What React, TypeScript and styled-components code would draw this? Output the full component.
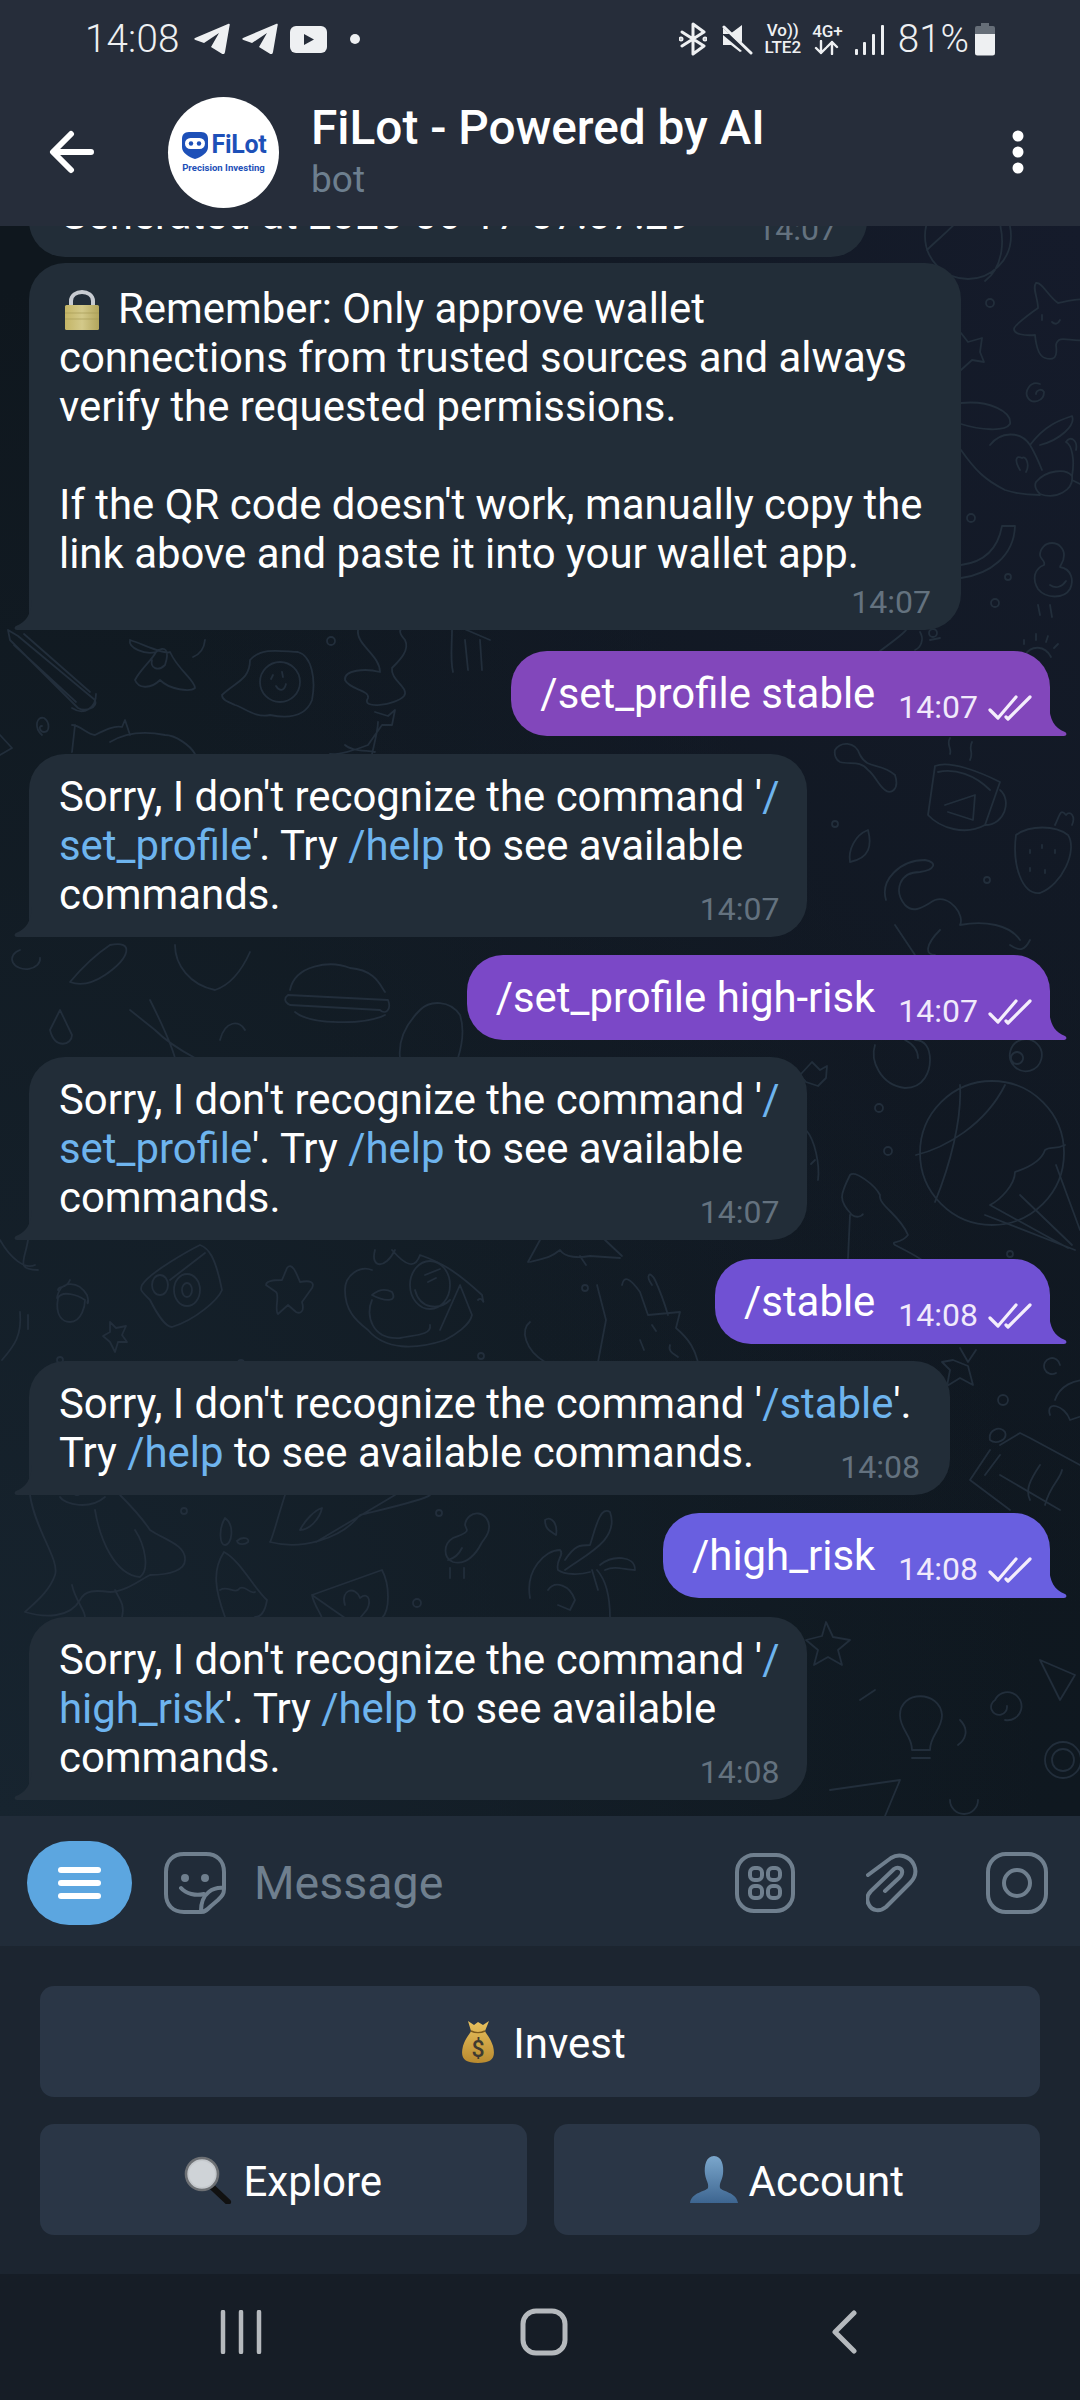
import React from "react";
import styled, { createGlobalStyle } from "styled-components";

const Global = createGlobalStyle`
  html, body { margin: 0; padding: 0; background: #161d26; }
  body { font-family: Roboto, "Liberation Sans", sans-serif; }
  #root { width: 1080px; height: 2400px; }
`;

const Screen = styled.div`
  width: 1080px;
  height: 2400px;
  display: flex;
  flex-direction: column;
  overflow: hidden;
`;

const Header = styled.header`
  height: 226px;
  flex: none;
  background: #262d3a;
  display: flex;
  flex-direction: column;
  position: relative;
  z-index: 2;
`;

const StatusBar = styled.div`
  height: 78px;
  display: flex;
  align-items: flex-start;
  justify-content: space-between;
  padding: 0 84px 0 85px;
  color: #eef0f2;
`;

const StatusGroup = styled.div`
  display: flex;
  align-items: center;
  height: 78px;
`;

const Clock = styled.span`
  font-size: 38.5px;
  font-weight: 300;
  line-height: 78px;
  margin-right: 14px;
  letter-spacing: 0.2px;
`;

const Battery = styled.span`
  font-size: 38.5px;
  font-weight: 300;
  line-height: 78px;
  margin: 0 5px 0 14px;
`;

const NetStack = styled.span`
  display: flex;
  flex-direction: column;
  align-items: center;
  font-size: 17px;
  font-weight: 500;
  line-height: 17px;
  margin-left: 11px;
`;

const Toolbar = styled.div`
  flex: 1;
  display: flex;
  align-items: center;
  padding: 0 0 0 48px;
`;

const Avatar = styled.div`
  width: 111px;
  height: 111px;
  border-radius: 50%;
  background: #fff;
  margin-left: 72px;
  flex: none;
  display: flex;
  flex-direction: column;
  align-items: center;
  justify-content: center;
  color: #1d50b8;
`;

const LogoTop = styled.div`
  display: flex;
  align-items: center;
  gap: 3px;
  font-size: 25px;
  font-weight: 700;
  line-height: 28px;
  letter-spacing: -0.3px;
`;

const LogoSub = styled.div`
  font-size: 9.6px;
  font-weight: 700;
  line-height: 11px;
  margin-top: 3px;
`;

const TitleBlock = styled.div`
  margin-left: 32px;
  flex: 1;
  margin-top: -2px;
`;

const Title = styled.div`
  color: #fff;
  font-size: 47.8px;
  font-weight: 500;
  line-height: 56px;
`;

const Subtitle = styled.div`
  color: #6d7f8f;
  font-size: 37px;
  line-height: 44px;
  margin-top: 2px;
`;

const MoreDots = styled.svg`
  margin-right: 56px;
  flex: none;
`;

const Chat = styled.main`
  height: 1590px;
  flex: none;
  position: relative;
  overflow: hidden;
  background:
    radial-gradient(ellipse at 100% 0%, #151b2b 0, transparent 62%),
    radial-gradient(ellipse at 0% 100%, #17242f 0, transparent 68%),
    radial-gradient(ellipse at 100% 100%, #0f1820 0, transparent 45%),
    #0f171e;
`;

const Wallpaper = styled.svg`
  position: absolute;
  inset: 0;
  fill: none;
  stroke: #222e3b;
  stroke-width: 1.8;
  stroke-linecap: round;
  stroke-linejoin: round;
`;

const MessageList = styled.div`
  position: relative;
  height: 100%;
  display: flex;
  flex-direction: column;
  justify-content: flex-end;
  padding: 0 30px 16px 29px;
  box-sizing: border-box;
`;

const Incoming = styled.div<{ $width: number; $top: number; $noTail?: boolean; $tall?: boolean }>`
  position: relative;
  flex: none;
  width: ${(p) => p.$width}px;
  box-sizing: border-box;
  margin-top: ${(p) => p.$top}px;
  background: #222d38;
  border-radius: 36px 36px 36px ${(p) => (p.$noTail ? "36px" : "0")};
  padding: ${(p) => (p.$tall ? "21px" : "18px")} 30px 12px 30px;
  display: grid;
`;

const IncomingText = styled.div<{ $pad: number }>`
  grid-area: 1 / 1;
  color: #fff;
  font-size: 41.9px;
  line-height: 49px;
  white-space: nowrap;
  padding-bottom: ${(p) => p.$pad}px;
`;

const IncomingTime = styled.div`
  grid-area: 1 / 1;
  align-self: end;
  justify-self: end;
  color: #64727f;
  font-size: 32px;
  line-height: 31px;
`;

const Outgoing = styled.div<{ $color: string; $top: number }>`
  position: relative;
  flex: none;
  align-self: flex-end;
  margin-top: ${(p) => p.$top}px;
  background: ${(p) => p.$color};
  border-radius: 36px 36px 0 36px;
  padding: 18px 18px 13px 29px;
  display: flex;
  align-items: flex-end;
`;

const OutgoingText = styled.div`
  color: #fff;
  font-size: 41.9px;
  line-height: 49px;
  white-space: nowrap;
  padding-bottom: 5px;
`;

const OutgoingMeta = styled.div`
  display: flex;
  align-items: center;
  margin-left: 23px;
  color: #f1eafb;
  font-size: 32px;
  line-height: 31px;
  gap: 10px;
`;

const Tail = styled.svg<{ $side: "left" | "right" }>`
  position: absolute;
  bottom: 0;
  ${(p) => (p.$side === "right" ? "right: -17px;" : "left: -15px; transform: scaleX(-1);")}
`;

const Cmd = styled.span`
  color: #6eb4ee;
`;

const InlineEmoji = styled.svg`
  display: inline-block;
  vertical-align: -8px;
  margin: 0 17px 0 4px;
`;

const InputBar = styled.div`
  height: 130px;
  flex: none;
  background: #212c39;
  display: flex;
  align-items: center;
  padding: 3px 32px 0 27px;
  color: #6f7f8e;
  box-sizing: border-box;
`;

const MenuButton = styled.div`
  width: 105px;
  height: 84px;
  border-radius: 42px;
  background: #5ca6e0;
  display: flex;
  flex-direction: column;
  align-items: center;
  justify-content: center;
  gap: 7px;
  flex: none;
`;

const MenuLine = styled.span`
  width: 43px;
  height: 6px;
  border-radius: 3px;
  background: #fff;
`;

const InputIcon = styled.svg<{ $left: number }>`
  flex: none;
  margin-left: ${(p) => p.$left}px;
  fill: none;
  stroke: currentColor;
  stroke-width: 4;
  stroke-linecap: round;
  stroke-linejoin: round;
`;

const Placeholder = styled.div`
  flex: 1;
  margin-left: 28px;
  font-size: 46.5px;
  line-height: 50px;
  color: #6f7f8e;
`;

const Keyboard = styled.div`
  height: 328px;
  flex: none;
  box-sizing: border-box;
  background: #1c2530;
  padding: 40px 40px 0;
  display: flex;
  flex-direction: column;
  gap: 27px;
`;

const KeyRow = styled.div`
  display: flex;
  gap: 27px;
`;

const Key = styled.div`
  flex: 1;
  height: 111px;
  border-radius: 14px;
  background: #2a3646;
  color: #fff;
  font-size: 42px;
  line-height: 50px;
  display: flex;
  align-items: center;
  justify-content: center;
  gap: 11px;
`;

const KeyLabel = styled.span`
  margin-top: 5px;
`;

const NavBar = styled.nav`
  flex: 1;
  background: #161d26;
  position: relative;
  display: flex;
  align-items: center;
  padding-left: 220px;
  color: #b5b9bd;
`;

const NavIcon = styled.svg<{ $left: number }>`
  flex: none;
  margin-left: ${(p) => p.$left}px;
  margin-top: -10px;
  fill: none;
  stroke: currentColor;
  stroke-linecap: round;
  stroke-linejoin: round;
`;

const doodlePaths = [
  "M925 236a43 43 0 1 0 86 0a43 43 0 1 0 -86 0 M927 250 C945 232 962 222 972 198 M990 198 C1012 240 1000 270 985 281",
  "M1036 283 C1042 282 1048 296 1058 303 C1068 301 1080 298 1084 300 M1084 340 C1070 342 1058 334 1056 345 C1058 360 1052 360 1045 358 C1038 356 1036 345 1035 335 C1024 336 1014 334 1014 329 C1014 325 1030 314 1038 308 C1038 298 1032 288 1036 283",
  "M1042 315 v5 M1052 322 c3 3 6 2 8 -2",
  "M961 333 L968 342 L982 338 L980 352 L984 362 L972 360 L961 370",
  "M1040 384 C1030 380 1024 392 1028 398 C1032 404 1044 402 1044 392 C1042 388 1036 390 1036 394",
  "M961 403 C990 400 1012 412 1010 424 C1005 432 980 430 961 424 M961 450 C975 470 985 480 1005 490 C1020 495 1032 495 1040 495 M990 445 C1000 432 1020 430 1030 445 C1036 455 1040 465 1042 470 M1030 445 C1045 425 1060 420 1072 416 C1076 425 1060 440 1040 445",
  "M1020 470 C1014 460 1016 455 1022 458 C1026 455 1030 465 1026 472 M1036 482 C1046 470 1066 468 1072 476 C1074 490 1056 500 1040 494 C1036 490 1034 486 1036 482 M1072 476 C1075 460 1072 445 1066 442 C1070 435 1078 440 1076 450 M1072 480 l8 4",
  "M961 565 C985 562 998 548 1002 526 L1015 526 C1014 556 990 574 961 578",
  "M1040 555 a12 12 0 1 1 24 0 c0 8 -4 10 -4 12 c12 2 14 14 10 22 c-6 10 -24 10 -32 0 c-6 -10 -4 -20 6 -24 c2 -4 -4 -6 -4 -10 Z M1050 585 c6 4 12 2 16 -4 M1038 605 l2 10 M1050 605 l2 12",
  "M1025 655 c6 -10 20 -10 26 2 M1024 640 v4 M1036 634 v6 M1048 636 l-2 6 M1058 644 l-4 4",
  "M880 651 C895 640 905 632 906 630 M920 632 C925 640 920 648 915 650 M930 640 l10 -2",
  "M8 630 L18 636 L95 700 C98 708 85 712 78 708 L10 640 Z M24 634 L90 692 M14 645 L76 702 M72 708 C84 716 96 708 96 694",
  "M130 640 C145 645 165 655 170 652 C178 670 195 680 195 688 C190 692 170 690 160 680 C150 690 138 688 135 680 C140 670 152 660 156 652 C145 655 128 648 130 640 M156 652 C165 645 170 650 165 665 C158 672 150 668 152 660 M205 640 C204 650 198 655 193 657",
  "M222 695 C235 682 250 680 250 660 C262 646 285 652 298 652 C312 656 316 680 312 700 C305 718 285 718 270 715 C255 718 245 708 235 705 C228 702 222 700 222 695",
  "M260 682 a20 20 0 1 0 40 0 a20 20 0 1 0 -40 0 M273 675 l-2 4 M282 672 l1 5 M276 686 c3 5 8 6 10 -2",
  "M358 630 C356 645 380 655 380 672 C365 668 344 670 345 680 C350 690 370 690 368 698 C360 710 396 705 404 696 C410 688 390 680 392 668 C400 660 410 650 405 640 C398 632 400 630 402 628",
  "M375 712 L388 716 L395 710 L392 725 L382 725 L368 745 C355 750 340 755 330 754 M345 745 C350 750 360 750 375 752 M378 722 C378 730 374 745 372 754",
  "M452 630 C452 645 450 660 453 672 M455 625 L490 640 M465 640 L468 670 M480 640 L482 670",
  "M75 725 L72 752 M72 725 C80 725 88 735 95 735 C105 730 115 725 122 727 L125 720 L130 735 M110 742 C130 730 150 732 165 735 C175 735 190 745 195 754",
  "M42 735 C34 728 36 716 44 718 C50 722 50 732 44 732 C40 732 38 726 42 726",
  "M0 735 L12 748 L0 755",
  "M935 766 C950 760 980 772 1000 782 L985 825 C965 836 940 828 928 815 Z M938 772 C955 768 975 775 990 790 M1000 790 C1012 800 1005 825 985 825 M945 805 L975 795 L973 820 L948 812 M950 738 C946 745 952 748 950 754 M972 742 C968 750 974 752 970 760",
  "M835 750 C840 742 855 740 860 755 C868 770 880 762 895 775 C900 790 890 795 885 790 C878 785 875 775 868 770 C860 760 850 765 840 762 C836 760 834 755 835 750",
  "M1016 835 C1030 825 1055 825 1068 835 C1078 850 1062 885 1040 893 C1022 895 1012 865 1016 835 M1055 825 C1060 815 1060 808 1066 815 C1070 810 1076 816 1072 825 M1030 850 v3 M1042 845 v3 M1055 850 v3 M1030 868 v3 M1045 870 v3",
  "M850 862 C848 850 855 835 868 830 C872 845 870 858 850 862",
  "M886 900 C880 880 900 860 925 860 C938 862 935 870 920 872 C900 872 893 890 905 905 C915 915 925 905 935 900 C950 895 965 915 960 925 C985 920 1010 925 1020 940 M895 925 L915 955 M940 930 C925 945 925 955 935 955 M1010 945 C1020 952 1025 950 1030 940",
  "M20 950 a14 10 0 1 0 20 8 M110 945 C135 940 130 958 105 975 C90 985 78 985 70 982 C80 970 95 955 110 945",
  "M175 945 C175 965 190 985 215 990 C230 985 242 970 250 952",
  "M290 990 C295 965 330 960 350 968 C375 970 380 985 385 992 M288 995 L388 1000 C392 1010 385 1015 380 1010 L290 1005 C284 1002 284 998 288 995 M295 1012 C310 1025 365 1025 385 1015",
  "M150 1000 C160 1020 170 1040 175 1058 M130 1010 L155 1030 C165 1040 180 1050 195 1058",
  "M220 1040 C225 1020 240 1020 245 1030 M50 1030 L60 1010 L72 1035 C72 1045 55 1050 50 1030",
  "M420 1010 C430 1000 450 1000 460 1015 C465 1030 462 1045 458 1058 M400 1058 C398 1040 405 1025 420 1010",
  "M875 1045 C870 1060 880 1085 905 1088 C925 1088 930 1070 930 1060 C930 1048 925 1040 915 1040 M905 1040 C915 1045 918 1052 918 1058",
  "M1015 1067 a16 16 0 1 0 -1 -1 M1017 1052 a6 6 0 1 0 0.1 0 ",
  "M812 1062 L820 1070 L827 1066 L826 1078 L818 1086 L806 1082 L800 1075 Z",
  "M920 1153 a72 72 0 1 0 144 0 a72 72 0 1 0 -144 0 M916 1155 C945 1148 985 1125 1005 1085 M960 1085 C962 1120 950 1165 935 1202",
  "M1065 1145 C1055 1150 1050 1146 1045 1150 C1040 1165 1020 1170 1015 1172 C1015 1185 1000 1200 990 1205 L1068 1248 M1020 1195 L1072 1245 M1056 1165 L1080 1230 M985 1215 L1075 1250",
  "M850 1175 C855 1170 875 1185 880 1195 C878 1205 900 1215 908 1235 C900 1245 890 1240 895 1245 C905 1250 915 1255 925 1262 M850 1175 C840 1195 838 1200 852 1215 C860 1220 865 1212 862 1215 M850 1215 L848 1258",
  "M806 1130 C815 1140 820 1165 818 1180 M815 1160 l-4 4",
  "M28 1240 C25 1260 15 1270 38 1270 M0 1240 C10 1258 25 1270 35 1265",
  "M57 1298 C60 1280 78 1280 87 1295 C90 1305 86 1305 88 1300 M58 1298 C55 1315 62 1322 70 1322 C82 1322 85 1305 85 1300 C78 1295 62 1290 58 1298 M70 1280 C66 1290 58 1285 58 1290",
  "M20 1312 C22 1335 15 1345 2 1360 M28 1315 v14",
  "M142 1285 C150 1272 190 1250 200 1245 C208 1248 215 1255 222 1290 C218 1300 195 1320 172 1327 C165 1327 155 1310 150 1300 C140 1290 140 1290 142 1285 M170 1280 L205 1253",
  "M152 1285 a8 10 0 1 0 16 0 a8 10 0 1 0 -16 0 M174 1290 a13 16 0 1 0 26 0 a13 16 0 1 0 -26 0 M182 1290 a5 7 0 1 0 10 0 a5 7 0 1 0 -10 0",
  "M287 1268 C292 1262 296 1272 300 1282 C310 1280 315 1282 312 1288 L302 1302 C305 1312 300 1314 296 1312 L288 1305 L278 1314 C274 1310 280 1295 276 1292 L266 1285 C266 1280 278 1280 282 1280 Z",
  "M110 1322 L116 1328 L126 1326 L122 1335 L127 1342 L118 1342 L115 1352 L110 1342 L103 1336 L110 1332 Z",
  "M375 1250 C370 1268 385 1270 395 1250 M392 1250 C405 1265 415 1270 420 1255 C440 1262 455 1270 482 1295 C485 1310 483 1295 478 1300 M345 1290 C345 1275 360 1265 372 1270 M345 1290 C345 1310 355 1320 368 1330 C385 1350 415 1350 445 1340 C455 1335 470 1325 472 1315 L460 1285 L440 1330",
  "M410 1285 a20 24 0 1 0 40 0 a20 24 0 1 0 -40 0 M415 1290 C420 1310 440 1310 450 1300 M425 1275 l15 -6 M428 1282 l8 -4",
  "M372 1295 C385 1302 398 1302 392 1292 C385 1288 378 1290 372 1295 M372 1300 C365 1315 372 1340 400 1338 C415 1335 432 1335 430 1325",
  "M530 1262 C545 1258 550 1258 560 1250 C565 1258 580 1258 590 1256 L620 1258 M540 1240 L528 1262 M580 1256 L586 1265 M605 1240 L622 1256",
  "M530 1322 C520 1330 525 1350 545 1362 M597 1285 L606 1320 L598 1362 M622 1285 C624 1275 630 1278 640 1292 L648 1315 L680 1312 L676 1328 C690 1340 695 1350 698 1362 M652 1285 C645 1275 650 1270 655 1280 C662 1295 665 1305 668 1315",
  "M640 1340 l4 10 M652 1325 l4 6 M670 1345 c-2 6 2 8 8 12",
  "M30 1495 C35 1530 60 1560 55 1575 C50 1590 38 1600 25 1612 C45 1618 70 1618 80 1600 C85 1590 95 1590 110 1592 C125 1592 140 1580 150 1575 C170 1575 185 1570 185 1560 C186 1545 165 1540 150 1530 C140 1515 125 1500 120 1495",
  "M60 1497 C65 1505 90 1510 105 1497 M95 1510 C100 1540 115 1575 140 1577 C150 1570 145 1545 135 1530",
  "M72 1585 C75 1600 85 1610 85 1617 M115 1590 C120 1600 125 1605 122 1617",
  "M225 1518 C218 1530 220 1545 225 1545 C232 1545 235 1525 225 1518 M237 1541 C242 1536 250 1538 248 1542 C245 1545 238 1545 237 1541",
  "M224 1552 C212 1570 215 1590 225 1617 M224 1552 C240 1560 255 1590 267 1600 C265 1612 260 1617 255 1617 M220 1590 C228 1585 235 1595 240 1588 C246 1585 250 1595 255 1592",
  "M285 1495 C280 1510 272 1540 270 1542 C300 1550 340 1540 360 1515 C380 1510 425 1500 430 1495 M316 1542 L395 1495 M300 1530 C305 1520 315 1510 322 1508 C320 1518 310 1530 300 1530",
  "M312 1595 L382 1570 C390 1585 390 1610 382 1618 M312 1595 C314 1605 320 1612 322 1618 M312 1595 L345 1618 M345 1605 C340 1590 355 1585 360 1598 C370 1590 372 1605 365 1612 L360 1618",
  "M465 1525 a12 13 0 1 1 24 3 c0 7 -6 12 -8 16 c-4 8 -14 22 -28 18 c-10 -4 -10 -18 0 -24 c4 -2 14 -4 14 -8 Z M448 1560 c8 -2 12 -8 14 -12 M450 1568 v10 M464 1568 v10",
  "M545 1520 C552 1515 558 1525 556 1535 C548 1530 545 1528 545 1520 M530 1598 C525 1570 545 1550 560 1550 C565 1555 555 1560 558 1570 C565 1575 580 1575 590 1572 M610 1618 C610 1595 606 1580 597 1570 M592 1570 L598 1590 M565 1570 C585 1555 620 1540 610 1512 C600 1505 595 1530 590 1545 C580 1545 575 1545 565 1560",
  "M548 1590 C555 1580 570 1585 575 1600 L570 1610 L558 1605 M600 1565 C612 1555 635 1555 635 1570 C625 1570 615 1565 605 1570",
  "M826 1622 L833 1637 L850 1640 L838 1650 L842 1665 L828 1657 L814 1665 L818 1650 L806 1640 L822 1636 Z",
  "M900 1715 C900 1690 940 1690 942 1715 C942 1730 930 1735 930 1750 L912 1750 C912 1735 900 1730 900 1715 M912 1758 h18",
  "M1005 1720 a14 14 0 1 0 -10 -20 a8 8 0 1 0 12 6",
  "M830 1790 L900 1780 L885 1816 M960 1720 C970 1730 965 1740 958 1745",
  "M1040 1660 L1075 1675 L1060 1700 Z M1045 1760 a18 18 0 1 0 36 0 a18 18 0 1 0 -36 0 M1052 1760 a11 11 0 1 0 22 0 a11 11 0 1 0 -22 0",
  "M950 1800 a14 14 0 1 0 28 0 M860 1700 L875 1690",
  "M960 1348 L968 1362 L976 1350 M953 1360 L968 1366 L973 1385 L960 1378 L947 1386 L950 1370 L942 1362 Z",
  "M1060 1365 a8 8 0 1 0 -4 8 M1055 1400 C1060 1385 1075 1380 1085 1380 M1050 1415 C1045 1400 1065 1405 1070 1420 L1085 1415",
  "M1000 1445 L1020 1433 L1030 1438 L1080 1465 M990 1440 C988 1430 1000 1425 1005 1432 C1008 1440 996 1445 990 1440 M990 1450 L970 1480 L1010 1510 M1000 1455 L985 1475 M1000 1475 L1060 1510 M1062 1470 C1060 1480 1050 1485 1045 1505 M1040 1465 C1030 1480 1025 1490 1030 1500",
];

const doodleRings: [number, number, number][] = [
  [990, 303, 4], [971, 518, 4], [1008, 577, 3], [995, 603, 4], [933, 633, 4], [331, 641, 4],
  [879, 1108, 4], [888, 1151, 4], [1010, 1254, 3], [1003, 1400, 5], [241, 1363, 3], [60, 1360, 3],
  [585, 1288, 3], [481, 1356, 3], [184, 1511, 3], [439, 1513, 3], [417, 1603, 4], [77, 1492, 3],
  [835, 824, 3], [987, 880, 3],
];

function Doodles() {
  return (
    <Wallpaper width="1080" height="1590" viewBox="0 226 1080 1590">
      {doodlePaths.map((d, i) => (
        <path key={i} d={d} />
      ))}
      {doodleRings.map(([cx, cy, r], i) => (
        <circle key={i} cx={cx} cy={cy} r={r} />
      ))}
    </Wallpaper>
  );
}

const BubbleTail = ({ side, color }: { side: "left" | "right"; color: string }) => (
  <Tail $side={side} width="18" height="30" viewBox="0 0 18 30">
    <path d="M0 0 C1 13 5 22 16 26 C18 27 18 30 15 30 L0 30 Z" fill={color} />
  </Tail>
);

const Checks = () => (
  <svg width="44" height="26" viewBox="0 0 44 26" fill="none" stroke="#f4eefc" strokeWidth="3.2" strokeLinecap="round" strokeLinejoin="round">
    <path d="M2 15 L10 23 L28 2" />
    <path d="M18 22 L20 24 L42 2" />
  </svg>
);

const Lock = () => (
  <InlineEmoji width="38" height="44" viewBox="0 0 38 44">
    <defs>
      <linearGradient id="lockBody" x1="0" x2="1" y1="0" y2="0">
        <stop offset="0" stopColor="#c4b566" />
        <stop offset="0.5" stopColor="#d3c98a" />
        <stop offset="1" stopColor="#b3a65c" />
      </linearGradient>
    </defs>
    <path d="M8 20 V14 C8 2 30 2 30 14 V20" fill="none" stroke="#c8ccd2" strokeWidth="4" />
    <rect x="2" y="18" width="34" height="25" rx="1.5" fill="url(#lockBody)" />
    <path d="M2 26h34M2 32h34" stroke="#a89c58" strokeWidth="0.7" />
  </InlineEmoji>
);

const MoneyBag = () => (
  <svg width="48" height="48" viewBox="-6 -2 48 48">
    <defs>
      <linearGradient id="bag" x1="0" x2="0" y1="0" y2="1">
        <stop offset="0" stopColor="#e9c25e" />
        <stop offset="1" stopColor="#b98a2f" />
      </linearGradient>
    </defs>
    <path d="M8 1 L14 5 L18 2 L23 5 L29 1 L25 11 C26 14 30 17 33 26 C36 38 32 43 18 43 C4 43 0 38 3 26 C6 17 10 14 11 11 Z" fill="url(#bag)" />
    <path d="M11 11 C15 13 21 13 25 11" stroke="#7c5a1c" strokeWidth="1.6" fill="none" />
    <text x="18" y="37" textAnchor="middle" fontFamily="Roboto, sans-serif" fontSize="23" fontWeight="500" fill="#3f3a30">$</text>
  </svg>
);

const Magnifier = () => (
  <svg width="48" height="48" viewBox="0 0 48 48">
    <path d="M27 30 L44 46" stroke="#111" strokeWidth="6" strokeLinecap="round" />
    <circle cx="18" cy="18" r="16" fill="#c4c8cc" stroke="#6d7074" strokeWidth="2.6" />
    <circle cx="18" cy="18" r="13" fill="#cfd3d7" />
  </svg>
);

const Bust = () => (
  <svg width="48" height="48" viewBox="0 0 48 48">
    <defs>
      <linearGradient id="bust" x1="0" x2="0" y1="0" y2="1">
        <stop offset="0" stopColor="#7ba7cc" />
        <stop offset="1" stopColor="#3d6590" />
      </linearGradient>
    </defs>
    <path d="M24 0 C32 0 34 10 33 18 C32 25 29 27 30 32 C33 36 46 36 48 47 L0 47 C2 36 15 36 18 32 C19 27 16 25 15 18 C14 10 16 0 24 0 Z" fill="url(#bust)" />
  </svg>
);

const PlaneIcon = styled.svg`
  margin-right: 12px;
  fill: #eef0f2;
`;

const Plane = () => (
  <PlaneIcon width="36" height="32" viewBox="0 0 36 32">
    <path d="M1 15 L34 1 C36 0 36 2 35.500 3 L31 29 C30.500 31.500 29 31.500 27.500 30.500 L17 24 L25 10 L10 20 L1.500 17 C0 16.500 0 15.500 1 15 Z" />
  </PlaneIcon>
);

const StatusDot = styled.svg`
  margin-left: 22px;
`;

const MuteIcon = styled.svg`
  margin-left: 15px;
  fill: #eef0f2;
`;

const SignalIcon = styled.svg`
  margin-left: 12px;
  fill: #eef0f2;
`;

const incomingCommands = (cmd: React.ReactNode) => (
  <>
    Sorry, I don't recognize the command '<Cmd>/</Cmd>
    <br />
    {cmd}'. Try <Cmd>/help</Cmd> to see available
    <br />
    commands.
  </>
);

const IN_BG = "#222d38";

export default function App() {
  return (
    <Screen>
      <Global />
      <Header>
        <StatusBar>
          <StatusGroup>
            <Clock>14:08</Clock>
            <Plane />
            <Plane />
            <svg width="37" height="27" viewBox="0 0 37 27">
              <rect width="37" height="27" rx="6" fill="#eef0f2" />
              <path d="M14 8 L24 13.500 L14 19 Z" fill="#262d3a" />
            </svg>
            <StatusDot width="12" height="12" viewBox="0 0 12 12">
              <circle cx="6" cy="6" r="5" fill="#eef0f2" />
            </StatusDot>
          </StatusGroup>
          <StatusGroup>
            <svg width="28" height="34" viewBox="0 0 28 34" fill="none" stroke="#eef0f2" strokeWidth="3" strokeLinejoin="round" strokeLinecap="round">
              <path d="M3 10 L25 24 L14 32 V2 L25 10 L3 24" />
              <circle cx="2" cy="17" r="1" />
              <circle cx="26" cy="17" r="1" />
            </svg>
            <MuteIcon width="31" height="31" viewBox="0 0 31 31">
              <path d="M1 10 H8 L20 1 V18 L14 16 L1 4 Z M1 11 V21 H9 L18 28 L20 27 Z" />
              <path d="M2 3 L29 29" stroke="#eef0f2" strokeWidth="3" strokeLinecap="round" />
            </MuteIcon>
            <NetStack>
              <span>Vo))</span>
              <span>LTE2</span>
            </NetStack>
            <NetStack>
              <span>4G+</span>
              <svg width="30" height="15" viewBox="0 0 30 15" fill="none" stroke="#eef0f2" strokeWidth="2.400" strokeLinecap="round" strokeLinejoin="round">
                <path d="M9 1 V13 M4 8 L9 13 L14 8 M20 14 V2 M15 7 L20 2 L25 7" />
              </svg>
            </NetStack>
            <SignalIcon width="29" height="31" viewBox="0 0 29 31">
              <rect x="0" y="25" width="3" height="6" rx="1" />
              <rect x="8" y="18" width="3" height="13" rx="1" />
              <rect x="17" y="10" width="3" height="21" rx="1" />
              <rect x="26" y="1" width="3" height="30" rx="1" />
            </SignalIcon>
            <Battery>81%</Battery>
            <svg width="22" height="33" viewBox="0 0 22 33">
              <path d="M7 0 H15 V3 H19 A2 2 0 0 1 21 5 V11 H1 V5 A2 2 0 0 1 3 3 H7 Z" fill="#666e78" />
              <path d="M1 11 H21 V30 A2.500 2.500 0 0 1 18.500 32.500 H3.500 A2.500 2.500 0 0 1 1 30 Z" fill="#eef0f2" />
            </svg>
          </StatusGroup>
        </StatusBar>
        <Toolbar>
          <svg width="48" height="44" viewBox="0 0 48 44" fill="none" stroke="#fff" strokeWidth="6" strokeLinecap="round" strokeLinejoin="round">
            <path d="M43 22 H6 M23 4 L5 22 L23 40" />
          </svg>
          <Avatar>
            <LogoTop>
              <svg width="28" height="28" viewBox="0 0 28 28">
                <path d="M8 1 H20 C25 1 27 4 27 8 V16 C27 22 20 26 14 28 C8 26 1 22 1 16 V8 C1 4 3 1 8 1 Z" fill="#1d50b8" />
                <rect x="4" y="7" width="20" height="11" rx="5.500" fill="#fff" />
                <circle cx="10" cy="12.500" r="2.200" fill="#1d50b8" />
                <circle cx="18" cy="12.500" r="2.200" fill="#1d50b8" />
              </svg>
              FiLot
            </LogoTop>
            <LogoSub>Precision Investing</LogoSub>
          </Avatar>
          <TitleBlock>
            <Title>FiLot - Powered by AI</Title>
            <Subtitle>bot</Subtitle>
          </TitleBlock>
          <MoreDots width="12" height="44" viewBox="0 0 12 44" fill="#fff">
            <circle cx="6" cy="6" r="5.500" />
            <circle cx="6" cy="22" r="5.500" />
            <circle cx="6" cy="38" r="5.500" />
          </MoreDots>
        </Toolbar>
      </Header>

      <Chat>
        <Doodles />
        <MessageList>
          <Incoming $width={838} $top={0} $noTail>
            <IncomingText $pad={6}>Generated at 2025-06-17 07:07:29</IncomingText>
            <IncomingTime>14:07</IncomingTime>
          </Incoming>
          <Incoming $width={932} $top={6} $tall>
            <IncomingText $pad={40}>
              <Lock />
              Remember: Only approve wallet
              <br />
              connections from trusted sources and always
              <br />
              verify the requested permissions.
              <br />
              <br />
              If the QR code doesn't work, manually copy the
              <br />
              link above and paste it into your wallet app.
            </IncomingText>
            <IncomingTime>14:07</IncomingTime>
            <BubbleTail side="left" color={IN_BG} />
          </Incoming>
          <Outgoing $color="#8247bb" $top={21}>
            <OutgoingText>/set_profile stable</OutgoingText>
            <OutgoingMeta>
              14:07
              <Checks />
            </OutgoingMeta>
            <BubbleTail side="right" color="#8247bb" />
          </Outgoing>
          <Incoming $width={778} $top={18}>
            <IncomingText $pad={6}>{incomingCommands(<Cmd>set_profile</Cmd>)}</IncomingText>
            <IncomingTime>14:07</IncomingTime>
            <BubbleTail side="left" color={IN_BG} />
          </Incoming>
          <Outgoing $color="#7b48c7" $top={18}>
            <OutgoingText>/set_profile high-risk</OutgoingText>
            <OutgoingMeta>
              14:07
              <Checks />
            </OutgoingMeta>
            <BubbleTail side="right" color="#7b48c7" />
          </Outgoing>
          <Incoming $width={778} $top={17}>
            <IncomingText $pad={6}>{incomingCommands(<Cmd>set_profile</Cmd>)}</IncomingText>
            <IncomingTime>14:07</IncomingTime>
            <BubbleTail side="left" color={IN_BG} />
          </Incoming>
          <Outgoing $color="#7051d3" $top={19}>
            <OutgoingText>/stable</OutgoingText>
            <OutgoingMeta>
              14:08
              <Checks />
            </OutgoingMeta>
            <BubbleTail side="right" color="#7051d3" />
          </Outgoing>
          <Incoming $width={921} $top={17}>
            <IncomingText $pad={6}>
              Sorry, I don't recognize the command '<Cmd>/stable</Cmd>'.
              <br />
              Try <Cmd>/help</Cmd> to see available commands.
            </IncomingText>
            <IncomingTime>14:08</IncomingTime>
            <BubbleTail side="left" color={IN_BG} />
          </Incoming>
          <Outgoing $color="#695fe0" $top={18}>
            <OutgoingText>/high_risk</OutgoingText>
            <OutgoingMeta>
              14:08
              <Checks />
            </OutgoingMeta>
            <BubbleTail side="right" color="#695fe0" />
          </Outgoing>
          <Incoming $width={778} $top={19}>
            <IncomingText $pad={6}>{incomingCommands(<Cmd>high_risk</Cmd>)}</IncomingText>
            <IncomingTime>14:08</IncomingTime>
            <BubbleTail side="left" color={IN_BG} />
          </Incoming>
        </MessageList>
      </Chat>

      <InputBar>
        <MenuButton>
          <MenuLine />
          <MenuLine />
          <MenuLine />
        </MenuButton>
        <InputIcon $left={32} width="62" height="62" viewBox="0 0 62 62">
          <path d="M20 2 H42 C53 2 60 9 60 20 V37 C60 42 58 44 54 48 L47 54 C43 58 41 60 37 60 H20 C9 60 2 53 2 42 V20 C2 9 9 2 20 2 Z" />
          <path d="M17 36 C22 42 32 44 40 42 M60 36 C50 35 37 40 37 59" />
          <circle cx="21" cy="26" r="2" fill="currentColor" />
          <circle cx="41" cy="26" r="2" fill="currentColor" />
        </InputIcon>
        <Placeholder>Message</Placeholder>
        <InputIcon $left={0} width="60" height="60" viewBox="0 0 60 60">
          <rect x="2" y="2" width="56" height="56" rx="17" />
          <rect x="15" y="15" width="12" height="12" rx="4.500" />
          <rect x="33" y="15" width="12" height="12" rx="4.500" />
          <rect x="15" y="33" width="12" height="12" rx="4.500" />
          <rect x="33" y="33" width="12" height="12" rx="4.500" />
        </InputIcon>
        <InputIcon $left={71} width="52" height="60" viewBox="0 0 52 60">
          <path d="M2 22 L25 5 C33 0 44 3 48 12 C51 19 49 25 44 30 L20 54 C14 59 6 58 3 52 C0 47 1 42 5 38 L28 16 C32 13 37 16 36 20 C36 22 35 23 33 25 L19 38" />
        </InputIcon>
        <InputIcon $left={68} width="62" height="62" viewBox="0 0 62 62">
          <rect x="2" y="2" width="58" height="58" rx="18" />
          <circle cx="31" cy="31" r="13" />
        </InputIcon>
      </InputBar>

      <Keyboard>
        <KeyRow>
          <Key>
            <MoneyBag />
            <KeyLabel>Invest</KeyLabel>
          </Key>
        </KeyRow>
        <KeyRow>
          <Key>
            <Magnifier />
            <KeyLabel>Explore</KeyLabel>
          </Key>
          <Key>
            <Bust />
            <KeyLabel>Account</KeyLabel>
          </Key>
        </KeyRow>
      </Keyboard>

      <NavBar>
        <NavIcon $left={0} width="42" height="44" viewBox="0 0 42 44" strokeWidth="4.500">
          <path d="M3 2 V42 M21 2 V42 M39 2 V42" />
        </NavIcon>
        <NavIcon $left={258} width="48" height="48" viewBox="0 0 48 48" strokeWidth="5">
          <rect x="3" y="3" width="42" height="42" rx="13" />
        </NavIcon>
        <NavIcon $left={262} width="28" height="44" viewBox="0 0 28 44" strokeWidth="5">
          <path d="M24 3 L5 22 L24 41" />
        </NavIcon>
      </NavBar>
    </Screen>
  );
}
